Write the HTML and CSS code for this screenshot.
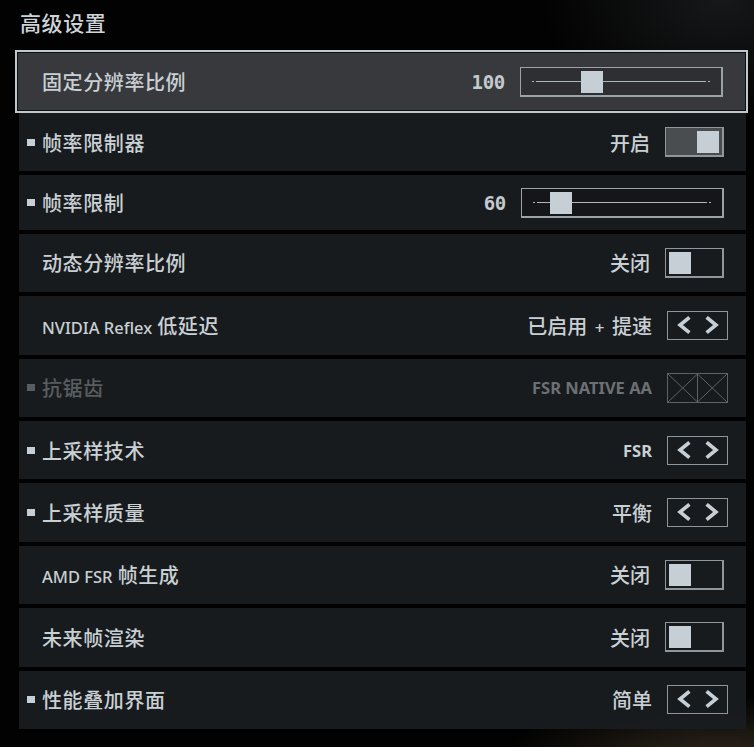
FILE: index.html
```html
<!DOCTYPE html>
<html lang="zh-CN">
<head>
<meta charset="utf-8">
<title>高级设置</title>
<link rel="stylesheet" href="styles.css">
</head>
<body>
<div class="screen">
  <h1 class="title">高级设置</h1>
  <div class="list">
    <div class="row focused">
      <span class="bullet hidden"></span>
      <span class="label">固定分辨率比例</span>
      <span class="value num">100</span>
      <div class="slider">
        <span class="track"></span>
        <span class="handle" style="left:60px"></span>
      </div>
    </div>

    <div class="row">
      <span class="bullet"></span>
      <span class="label">帧率限制器</span>
      <span class="value">开启</span>
      <div class="toggle on"><span class="knob"></span></div>
    </div>

    <div class="row short">
      <span class="bullet"></span>
      <span class="label">帧率限制</span>
      <span class="value num">60</span>
      <div class="slider">
        <span class="track"></span>
        <span class="handle" style="left:28px"></span>
      </div>
    </div>

    <div class="row">
      <span class="bullet hidden"></span>
      <span class="label">动态分辨率比例</span>
      <span class="value">关闭</span>
      <div class="toggle"><span class="knob"></span></div>
    </div>

    <div class="row">
      <span class="bullet hidden"></span>
      <span class="label"><span class="latin">NVIDIA Reflex</span> 低延迟</span>
      <span class="value">已启用 <span class="plus">+</span> 提速</span>
      <div class="arrows">
        <svg width="59" height="27" viewBox="0 0 59 27"><polyline points="20,6.5 12,13 20,19.5"/><polyline points="40,6.5 48,13 40,19.5"/></svg>
      </div>
    </div>

    <div class="row disabled">
      <span class="bullet"></span>
      <span class="label">抗锯齿</span>
      <span class="value caps">FSR NATIVE AA</span>
      <div class="crossed">
        <svg width="59" height="28" viewBox="0 0 59 28"><line x1="29.5" y1="0" x2="29.5" y2="28"/><line x1="0" y1="0" x2="29.5" y2="28"/><line x1="29.5" y1="0" x2="0" y2="28"/><line x1="29.5" y1="0" x2="59" y2="28"/><line x1="59" y1="0" x2="29.5" y2="28"/></svg>
      </div>
    </div>

    <div class="row">
      <span class="bullet"></span>
      <span class="label">上采样技术</span>
      <span class="value caps">FSR</span>
      <div class="arrows">
        <svg width="59" height="27" viewBox="0 0 59 27"><polyline points="20,6.5 12,13 20,19.5"/><polyline points="40,6.5 48,13 40,19.5"/></svg>
      </div>
    </div>

    <div class="row">
      <span class="bullet"></span>
      <span class="label">上采样质量</span>
      <span class="value">平衡</span>
      <div class="arrows">
        <svg width="59" height="27" viewBox="0 0 59 27"><polyline points="20,6.5 12,13 20,19.5"/><polyline points="40,6.5 48,13 40,19.5"/></svg>
      </div>
    </div>

    <div class="row">
      <span class="bullet hidden"></span>
      <span class="label"><span class="latin">AMD FSR</span> 帧生成</span>
      <span class="value">关闭</span>
      <div class="toggle"><span class="knob"></span></div>
    </div>

    <div class="row">
      <span class="bullet hidden"></span>
      <span class="label">未来帧渲染</span>
      <span class="value">关闭</span>
      <div class="toggle"><span class="knob"></span></div>
    </div>

    <div class="row">
      <span class="bullet"></span>
      <span class="label">性能叠加界面</span>
      <span class="value">简单</span>
      <div class="arrows">
        <svg width="59" height="27" viewBox="0 0 59 27"><polyline points="20,6.5 12,13 20,19.5"/><polyline points="40,6.5 48,13 40,19.5"/></svg>
      </div>
    </div>
  </div>
</div>
</body>
</html>
```

FILE: styles.css
```css
* { box-sizing: border-box; }

html, body {
  margin: 0;
  padding: 0;
  width: 754px;
  height: 747px;
  overflow: hidden;
}

body {
  background:
    radial-gradient(ellipse 220px 70px at 720px 765px, rgba(70, 58, 42, 0.7), rgba(0, 0, 0, 0) 100%),
    radial-gradient(ellipse 180px 120px at 720px 0px, rgba(36, 38, 40, 0.6), rgba(0, 0, 0, 0) 100%),
    #020202;
  font-family: "Noto Sans CJK SC", "Noto Sans", sans-serif;
  color: #c9d0d4;
}

.screen {
  padding: 8px 0 0 19px;
}

.title {
  margin: 0 0 14px 1px;
  font-size: 21px;
  line-height: 28px;
  font-weight: 500;
  letter-spacing: 0.6px;
  color: #cdd3d6;
}

.list {
  width: 727px;
  display: flex;
  flex-direction: column;
  gap: 4px;
}

.row {
  height: 58.4px;
  display: flex;
  align-items: center;
  padding: 0 22px 0 8px;
  background: rgba(26, 29, 32, 0.94);
}

.row.short { height: 54.4px; }

.row.focused {
  height: 63px;
  margin: 0 -2px -4px -4px;
  padding: 0 23px 0 10px;
  background: #37393c;
  border: 2px solid #bfc8cc;
  box-shadow: inset 0 0 0 1px #0d0f10;
}

.bullet {
  width: 8px;
  height: 7px;
  margin-right: 7px;
  background: #c5cfd5;
  flex: none;
}
.bullet.hidden { visibility: hidden; }

.label {
  flex: 1;
  font-size: 20px;
  font-weight: 500;
  letter-spacing: 0.6px;
  white-space: nowrap;
}

.latin {
  font-family: "Noto Sans", sans-serif;
  font-size: 16.5px;
  font-weight: 500;
  letter-spacing: 0;
}

.value {
  margin-right: 15px;
  font-size: 20px;
  font-weight: 500;
  white-space: nowrap;
}

.value .plus {
  font-family: "Noto Sans", sans-serif;
  font-size: 17px;
  margin: 0 3px;
}

.value.num {
  font-family: "DejaVu Sans Mono", monospace;
  font-weight: 700;
  font-size: 19px;
  letter-spacing: -0.3px;
  color: #c3cacd;
}

.value.caps {
  font-family: "Noto Sans", sans-serif;
  font-weight: 700;
  font-size: 16.5px;
  letter-spacing: 0;
}

.slider {
  position: relative;
  width: 203px;
  height: 30px;
  flex: none;
  border: 1px solid #9ba3a7;
  border-right-width: 2px;
  border-bottom-width: 2px;
  background: rgba(0, 0, 0, 0.16);
}

.track {
  position: absolute;
  left: 11px;
  right: 11px;
  top: 13px;
  height: 2px;
  background: linear-gradient(to right,
    #aeb6ba 0 2px, transparent 2px 4px,
    #aeb6ba 4px calc(100% - 4px),
    transparent calc(100% - 4px) calc(100% - 2px),
    #aeb6ba calc(100% - 2px));
  background-size: 100% 1px;
  background-repeat: no-repeat;
  background-position: 0 0;
}

.handle {
  position: absolute;
  top: 3px;
  width: 22px;
  height: 22px;
  background: #c5cfd5;
}

.toggle {
  width: 59px;
  height: 30px;
  flex: none;
  display: flex;
  padding: 3px;
  border: 1px solid #8f979b;
  border-right-width: 2px;
  border-bottom-width: 2px;
}
.toggle.on {
  justify-content: flex-end;
  background: #4a4d50;
}
.knob {
  width: 22px;
  height: 22px;
  background: #c5cfd5;
}

.arrows, .crossed {
  width: 61px;
  height: 29px;
  flex: none;
  margin-right: -4px;
  border: 1px solid #8c969b;
  display: flex;
}
.arrows svg polyline {
  fill: none;
  stroke: #c5cfd5;
  stroke-width: 3.6;
  stroke-linecap: square;
  stroke-linejoin: miter;
}

.crossed {
  height: 30px;
  border-color: #5e6265;
}
.crossed svg line {
  stroke: #5e6265;
  stroke-width: 1;
}

.row.disabled .label { color: #595d60; }
.row.disabled .bullet { background: #595d60; }
.row.disabled .value { color: #6c7074; }
```
